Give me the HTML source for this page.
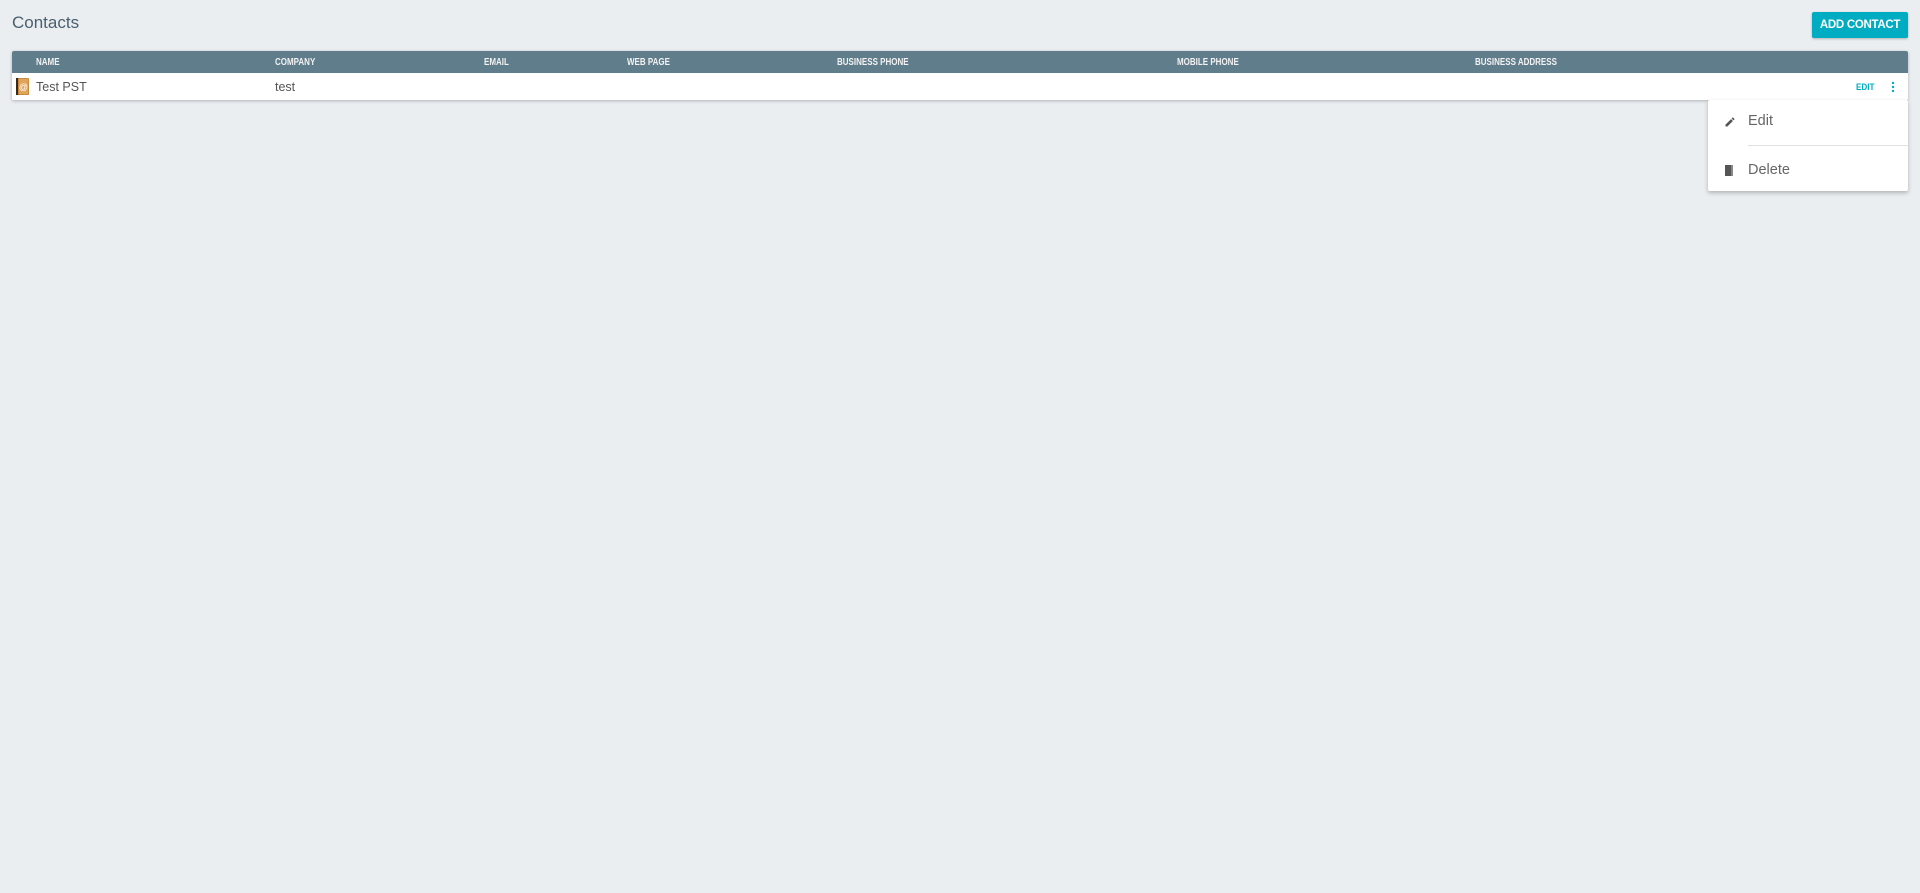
<!DOCTYPE html>
<html><head><meta charset="utf-8"><style>
*{margin:0;padding:0;box-sizing:border-box}
body{width:1920px;height:893px;background:#eaeef1;font-family:"Liberation Sans",sans-serif;position:relative;overflow:hidden}
.title{position:absolute;left:12px;top:13px;font-size:17px;color:#4a5f6e}
.btn{position:absolute;left:1812px;top:12px;width:96px;height:26px;background:#00acc1;color:#fff;font-weight:bold;font-size:11.5px;line-height:26px;text-align:center;border-radius:2px;box-shadow:0 1px 2px rgba(0,0,0,.25);letter-spacing:-0.3px}
.tbl{position:absolute;left:12px;top:51px;width:1896px;height:49px;background:#fff;box-shadow:0 1px 3px rgba(0,0,0,.25);border-radius:2px}
.hd{height:22px;background:#607d8b;border-radius:2px 2px 0 0;position:relative}
.hd span{position:absolute;top:6px;font-weight:bold;font-size:10px;color:#f2f2f2;transform:scaleX(0.8);transform-origin:0 0;white-space:nowrap}
.row{position:relative;height:27px}
.row span{position:absolute;top:7px;font-size:12.5px;color:#555}
.edit{position:absolute;left:1844px;top:9px;font-size:9px;font-weight:bold;color:#00acc1;transform:scaleX(0.9);transform-origin:0 0}
.menu{position:absolute;left:1708px;top:100px;width:200px;height:91px;background:#fff;box-shadow:0 2px 4px rgba(0,0,0,.25);border-radius:2px}
.menu .t{position:absolute;left:40px;font-size:14.5px;color:#666}
.div{position:absolute;left:40px;right:0;top:45px;height:1px;background:#e0e0e0}
</style></head><body>
<div class="title">Contacts</div>
<div class="btn">ADD CONTACT</div>
<div class="tbl">
 <div class="hd">
  <span style="left:24px">NAME</span><span style="left:263px">COMPANY</span><span style="left:472px">EMAIL</span><span style="left:615px">WEB PAGE</span><span style="left:825px">BUSINESS PHONE</span><span style="left:1165px">MOBILE PHONE</span><span style="left:1463px">BUSINESS ADDRESS</span>
 </div>
 <div class="row">
  <svg style="position:absolute;left:4px;top:5px" width="14" height="17" viewBox="0 0 14 17"><rect x="0" y="0" width="3" height="17" fill="#3a2a1a"/><rect x="2" y="0" width="11" height="17" rx="1" fill="#c98a3c"/><rect x="3" y="1" width="9" height="15" fill="#e0a55a"/><text x="7.5" y="12" font-size="9" text-anchor="middle" fill="#fff" font-family="Liberation Sans">@</text></svg>
  <span style="left:24px">Test PST</span><span style="left:263px">test</span>
  <div class="edit">EDIT</div>
  <svg style="position:absolute;left:1878px;top:8px" width="6" height="12"><circle cx="3" cy="2" r="1.2" fill="#00acc1"/><circle cx="3" cy="6" r="1.2" fill="#00acc1"/><circle cx="3" cy="10" r="1.2" fill="#00acc1"/></svg>
 </div>
</div>
<div class="menu">
 <svg style="position:absolute;left:16px;top:16px" width="12" height="12" viewBox="0 0 24 24"><path d="M3 17.25V21h3.75L17.81 9.94l-3.75-3.75L3 17.25zM20.71 7.04a1 1 0 0 0 0-1.41l-2.34-2.34a1 1 0 0 0-1.41 0l-1.83 1.83 3.75 3.75 1.83-1.83z" fill="#555"/></svg>
 <div class="t" style="top:13px">Edit</div>
 <div class="div"></div>
 <svg style="position:absolute;left:16px;top:65px" width="10" height="11"><rect x="1" y="0" width="8" height="11" fill="#555"/><rect x="7" y="0" width="2" height="11" fill="#888"/></svg>
 <div class="t" style="top:62px">Delete</div>
</div>
</body></html>
